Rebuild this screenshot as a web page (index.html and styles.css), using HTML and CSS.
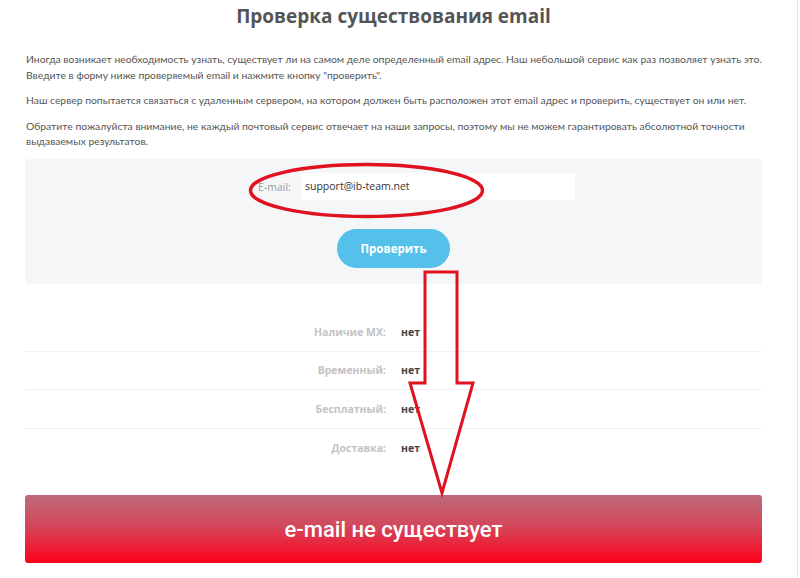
FILE: index.html
```html
<!DOCTYPE html>
<html lang="ru">
<head>
<meta charset="utf-8">
<title>Проверка существования email</title>
<link rel="stylesheet" href="styles.css">
</head>
<body>
<div class="page">
  <div class="content">
    <h1 class="title">Проверка существования email</h1>
    <p class="text">Иногда возникает необходимость узнать, существует ли на самом деле определенный email адрес. Наш небольшой сервис как раз позволяет узнать это.<br>Введите в форму ниже проверяемый email и нажмите кнопку "проверить".</p>
    <p class="text">Наш сервер попытается связаться с удаленным сервером, на котором должен быть расположен этот email адрес и проверить, существует он или нет.</p>
    <p class="text">Обратите пожалуйста внимание, не каждый почтовый сервис отвечает на наши запросы, поэтому мы не можем гарантировать абсолютной точности<br>выдаваемых результатов.</p>

    <div class="panel">
      <div class="field">
        <label class="field-label">E-mail:</label>
        <div class="field-input">support@ib-team.net</div>
      </div>
      <div class="actions">
        <button class="btn">Проверить</button>
      </div>
    </div>

    <div class="results">
      <div class="row"><span class="row-label">Наличие МХ:</span><span class="row-value">нет</span></div>
      <div class="row"><span class="row-label">Временный:</span><span class="row-value">нет</span></div>
      <div class="row"><span class="row-label">Бесплатный:</span><span class="row-value">нет</span></div>
      <div class="row"><span class="row-label">Доставка:</span><span class="row-value">нет</span></div>
    </div>

    <div class="verdict">e-mail не существует</div>
  </div>

  <svg class="annotations" width="800" height="578" viewBox="0 0 800 578">
    <ellipse cx="366.5" cy="190.5" rx="116" ry="26" fill="none" stroke="#e0121f" stroke-width="3.5"/>
    <polygon points="425,272 457,272 457,383 473,383 442,493 410,383 425,383" fill="none" stroke="#e0121f" stroke-width="3" stroke-linejoin="miter"/>
  </svg>
</div>
</body>
</html>
```

FILE: styles.css
```css
html, body {
  margin: 0;
  padding: 0;
  background: #ffffff;
}

.page {
  position: relative;
  width: 797px;
  height: 578px;
  border-right: 1px solid #e4e4e4;
  overflow: hidden;
  font-family: "Open Sans", "Liberation Sans", sans-serif;
}

.content {
  width: 737px;
  padding-left: 25px;
  display: flex;
  flex-direction: column;
}

.title {
  margin: 4px 0 0 0;
  text-align: center;
  font-family: "Open Sans", "Liberation Sans", sans-serif;
  font-weight: 700;
  font-size: 19px;
  line-height: 24px;
  color: #555555;
}

.text {
  margin: 0;
  font-family: "Lato", "Liberation Sans", sans-serif;
  font-size: 10.35px;
  line-height: 15.5px;
  color: #555555;
  padding-left: 1px;
  white-space: nowrap;
}

.title + .text {
  margin-top: 24px;
}

.text + .text {
  margin-top: 10px;
}

.panel {
  margin-top: 9.5px;
  height: 125px;
  box-sizing: border-box;
  background: #f5f6f8;
  border-radius: 4px;
  padding-top: 14px;
  display: flex;
  flex-direction: column;
}

.field {
  display: flex;
  align-items: center;
  margin-left: 233px;
}

.field-label {
  font-size: 10.5px;
  color: #9a9a9a;
  width: 43px;
}

.field-input {
  box-sizing: border-box;
  width: 274px;
  height: 27px;
  background: #ffffff;
  padding-left: 4px;
  font-size: 10.5px;
  line-height: 27px;
  color: #333333;
}

.actions {
  display: flex;
  justify-content: center;
  margin-top: 29px;
}

.btn {
  width: 113px;
  height: 39px;
  border: none;
  border-radius: 20px;
  background: #55c1ea;
  color: #ffffff;
  font-family: "Open Sans", "Liberation Sans", sans-serif;
  font-weight: 700;
  font-size: 11.5px;
  padding: 0;
}

.results {
  margin-top: 29px;
  display: flex;
  flex-direction: column;
}

.row {
  display: grid;
  grid-template-columns: 361px auto;
  column-gap: 15px;
  align-items: center;
  height: 38.5px;
  border-bottom: 1px solid #f0f0f2;
  box-sizing: border-box;
  font-size: 10.5px;
  font-weight: 700;
}

.row:last-child {
  border-bottom: none;
}

.row-label {
  text-align: right;
  color: #c3c3c3;
}

.row-value {
  color: #444444;
}

.verdict {
  margin-top: 28px;
  height: 68px;
  border-radius: 3px;
  background: linear-gradient(to bottom, #bd6a7a 0%, #d3485b 45%, #ff001c 100%);
  color: #ffffff;
  font-family: "Roboto", "Liberation Sans", sans-serif;
  font-weight: 500;
  font-size: 22px;
  display: flex;
  align-items: center;
  justify-content: center;
}

.annotations {
  position: absolute;
  left: 0;
  top: 0;
  pointer-events: none;
}
```
